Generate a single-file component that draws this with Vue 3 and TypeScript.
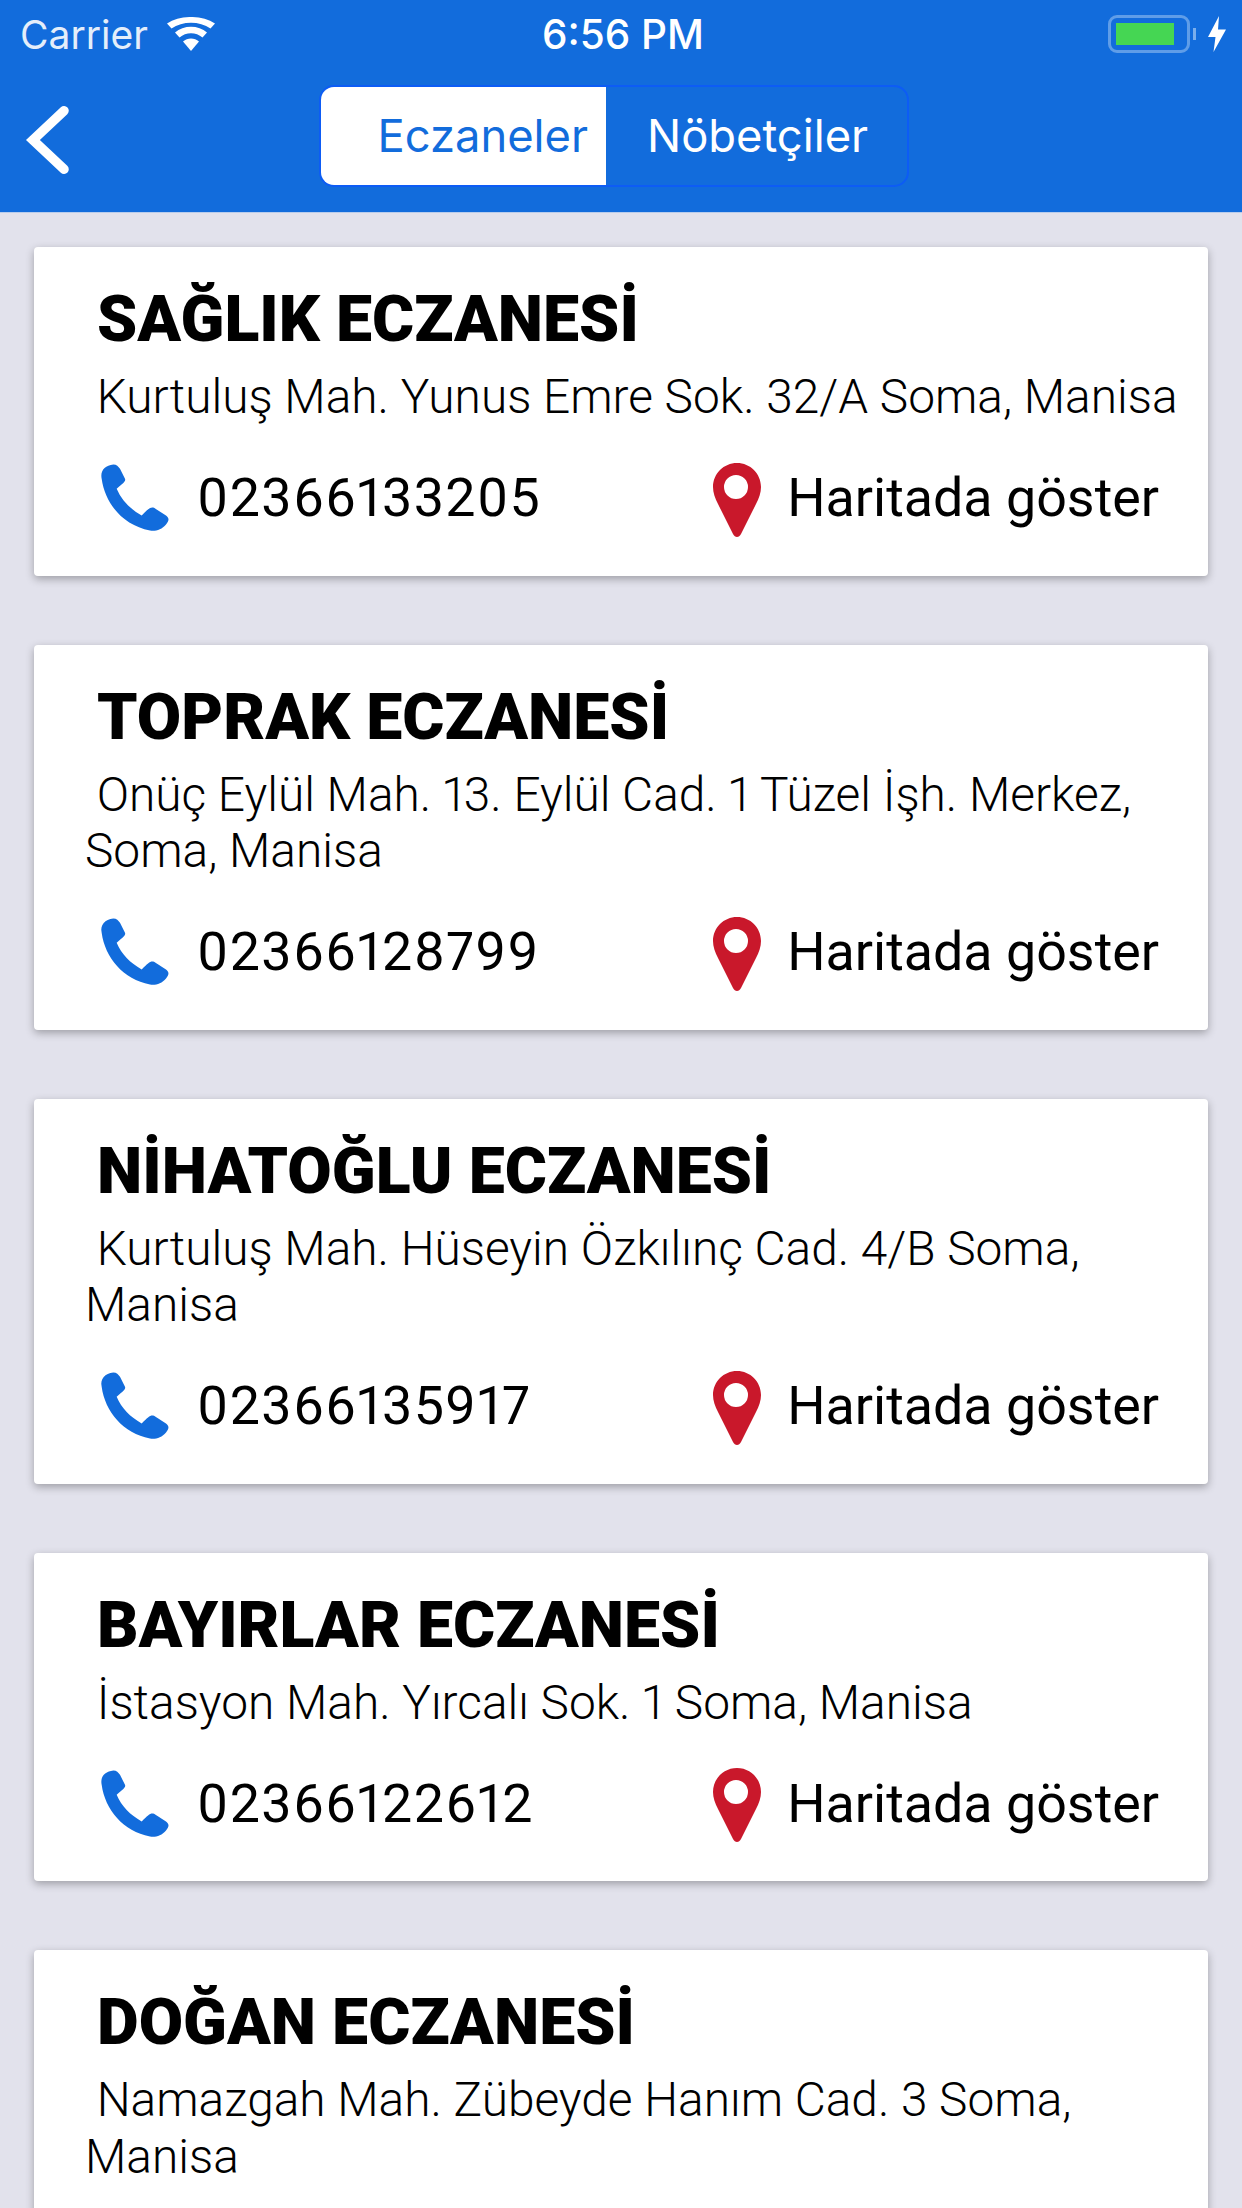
<template>
  <div class="screen">
    <header class="header">
      <div class="status">
        <div class="status__left">
          <span class="carrier">Carrier</span>
          <svg class="wifi" viewBox="0 0 48 34">
            <path d="M24 34 16 24.500C20.500 20.500 27.500 20.500 32 24.500Z" />
            <path d="M12.500 20.500 8 15.500C16.500 7.800 31.500 7.800 40 15.500L35.500 20.500C29 14.800 19 14.800 12.500 20.500Z" />
            <path d="M4.500 11.500 0 6.500C13 -2.200 35 -2.200 48 6.500L43.500 11.500C32.500 3.800 15.500 3.800 4.500 11.500Z" />
          </svg>
        </div>
        <span class="time">6:56 PM</span>
        <div class="status__right">
          <div class="battery"><div class="battery__level"></div></div>
          <div class="battery__cap"></div>
          <svg class="bolt" viewBox="0 0 18 36">
            <path d="M11 0 0 21H7.500L5.500 36 18 13.500H10Z" />
          </svg>
        </div>
      </div>
      <nav class="nav">
        <button class="back" type="button">
          <svg viewBox="0 0 46 72">
            <path d="M40 5 7 36 40 67" />
          </svg>
        </button>
        <div class="segment">
          <div class="segment__item is-active">Eczaneler</div>
          <div class="segment__item">Nöbetçiler</div>
        </div>
      </nav>
    </header>

    <main class="list">
      <article v-for="item in pharmacies" :key="item.name" class="card">
        <h2 class="card__title">{{ item.name }}</h2>
        <p class="card__address">{{ item.address }}</p>
        <div v-if="item.phone" class="card__row">
          <div class="card__action">
            <svg class="icon-phone" viewBox="60 38 210 206">
              <path d="M65 85C60 60 75 45 100 42 110 42 115 48 120 55L135 85C138 92 130 98 110 115 125 150 150 175 185 195 205 175 212 168 222 172L258 195C268 203 268 210 258 222 245 238 225 243 210 240 130 225 75 160 65 85Z" />
            </svg>
            <span class="card__phone">{{ item.phone }}</span>
          </div>
          <div class="card__action card__action--map">
            <svg class="icon-pin" viewBox="0 0 48 74">
              <path fill-rule="evenodd" d="M24 0C10.700 0 0 10.700 0 24 0 30 2 35 5 41L20 71C22 75 26 75 28 71L43 41C46 35 48 30 48 24 48 10.700 37.300 0 24 0ZM23 12A12 12 0 1 1 23 36 12 12 0 1 1 23 12Z" />
            </svg>
            <span class="card__map">Haritada göster</span>
          </div>
        </div>
      </article>
    </main>
  </div>
</template>

<script setup lang="ts">
interface Pharmacy {
  name: string
  address: string
  phone?: string
}

// last card runs off the bottom of the screen, its phone row is never seen
const pharmacies: Pharmacy[] = [
  { name: 'SAĞLIK ECZANESİ', address: ' Kurtuluş Mah. Yunus Emre Sok. 32/A Soma, Manisa', phone: '02366133205' },
  { name: 'TOPRAK ECZANESİ', address: ' Onüç Eylül Mah. 13. Eylül Cad. 1 Tüzel İşh. Merkez, Soma, Manisa', phone: '02366128799' },
  { name: 'NİHATOĞLU ECZANESİ', address: ' Kurtuluş Mah. Hüseyin Özkılınç Cad. 4/B Soma, Manisa', phone: '02366135917' },
  { name: 'BAYIRLAR ECZANESİ', address: ' İstasyon Mah. Yırcalı Sok. 1 Soma, Manisa', phone: '02366122612' },
  { name: 'DOĞAN ECZANESİ', address: ' Namazgah Mah. Zübeyde Hanım Cad. 3 Soma, Manisa' }
]
</script>

<style>
html,
body {
  margin: 0;
  background: #e2e2ec;
}
</style>

<style scoped>
.screen {
  width: 1242px;
  height: 2208px;
  overflow: hidden;
  background: #e2e2ec;
  font-family: Roboto, "Liberation Sans", sans-serif;
}
.header {
  height: 212px;
  background: #126cdc;
  border-bottom: 1px solid #b9cdec;
  color: #fff;
}
.status {
  height: 68px;
  display: grid;
  grid-template-columns: 1fr auto 1fr;
  align-items: center;
  padding: 0 16px 0 20px;
}
.status__left {
  display: flex;
  align-items: center;
  gap: 19px;
}
.carrier {
  font-family: Inter, sans-serif;
  font-size: 39px;
  color: #e4eefa;
}
.wifi {
  width: 48px;
  height: 34px;
  fill: #fff;
}
.time {
  font-family: Inter, sans-serif;
  font-size: 40.500px;
  font-weight: 500;
}
.status__right {
  display: flex;
  align-items: center;
  justify-content: flex-end;
}
.battery {
  box-sizing: border-box;
  width: 82px;
  height: 38px;
  padding: 5px;
  border: 3px solid #5f9de8;
  border-radius: 9px;
}
.battery__level {
  width: 58px;
  height: 100%;
  background: #45d653;
}
.battery__cap {
  width: 3px;
  height: 12px;
  margin-left: 3px;
  background: #7aaeec;
}
.bolt {
  width: 18px;
  height: 36px;
  margin-left: 12px;
  fill: #fff;
}
.nav {
  position: relative;
  height: 144px;
  display: flex;
  justify-content: center;
  align-items: flex-start;
  padding: 17px 14px 0 0;
  box-sizing: border-box;
}
.back {
  position: absolute;
  left: 25px;
  top: 38px;
  width: 46px;
  height: 68px;
  padding: 0;
  background: none;
  border: 0;
}
.back svg {
  display: block;
  width: 100%;
  height: 100%;
  fill: none;
  stroke: #fff;
  stroke-width: 10;
  stroke-linecap: round;
  stroke-linejoin: miter;
}
.segment {
  display: flex;
  width: 586px;
  height: 98px;
  border: 2px solid #0d5cf5;
  border-radius: 15px;
  overflow: hidden;
  font-family: Inter, sans-serif;
  font-size: 45.300px;
}
.segment__item {
  display: flex;
  align-items: center;
  justify-content: flex-end;
  padding: 0 18px 2px 0;
  box-sizing: border-box;
  width: 285px;
}
.segment__item + .segment__item {
  flex: 1;
  justify-content: flex-start;
  padding: 0 0 2px 41px;
}
.segment__item.is-active {
  background: #fff;
  color: #126cdc;
}
.list {
  display: flex;
  flex-direction: column;
  gap: 69px;
  padding: 34px 34px 0;
}
.card {
  flex: none;
  padding: 34px 49px 41px 51px;
  background: #fff;
  border-radius: 4px;
  box-shadow: 0 3px 8px rgba(0, 0, 0, 0.3);
}
.card__title {
  margin: 0 0 0 12px;
  font-size: 64.400px;
  line-height: 76px;
  font-weight: 900;
  color: #000;
}
.card__address {
  margin: 12px -28px 0 0;
  font-size: 47.800px;
  line-height: 56.500px;
  font-weight: 300;
  color: #000;
  white-space: pre-wrap;
  font-variant-numeric: proportional-nums;
}
.card__row {
  display: flex;
  justify-content: space-between;
  align-items: center;
  height: 74px;
  margin-top: 35px;
  padding-left: 15px;
}
.card__action {
  display: flex;
  align-items: center;
  gap: 27px;
}
.card__action--map {
  gap: 25px;
}
.icon-phone {
  width: 70px;
  height: 69px;
  fill: #126cdc;
}
.icon-pin {
  width: 50px;
  height: 74px;
  margin-top: 4px;
  fill: #c9182b;
}
.card__phone,
.card__map {
  font-size: 53.800px;
  color: #000;
}
.card__phone {
  font-variant-numeric: proportional-nums;
  letter-spacing: 1.400px;
}
</style>
